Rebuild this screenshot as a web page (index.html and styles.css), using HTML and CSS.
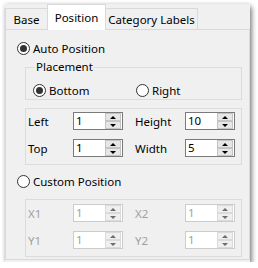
FILE: index.html
```html
<!DOCTYPE html>
<html>
<head>
<meta charset="utf-8">
<link rel="stylesheet" href="styles.css">
</head>
<body>
<div class="window">
  <div class="tabs">
    <div class="tab tab-base">Base</div>
    <div class="tab tab-active">Position</div>
    <div class="tab tab-cat">Category Labels</div>
  </div>
  <div class="panel">
    <div class="radio-row top-radio">
      <span class="radio checked"></span><span>Auto Position</span>
    </div>
    <fieldset class="placement">
      <legend>Placement</legend>
      <div class="place-row">
        <div class="radio-row place-bottom"><span class="radio checked"></span><span>Bottom</span></div>
        <div class="radio-row"><span class="radio"></span><span>Right</span></div>
      </div>
    </fieldset>
    <div class="box box-auto">
      <div class="grid">
        <span class="lbl">Left</span>
        <div class="spin"><span class="val">1</span><span class="btns"><span class="btn up"></span><span class="btn down"></span></span></div>
        <span class="lbl">Height</span>
        <div class="spin"><span class="val">10</span><span class="btns"><span class="btn up"></span><span class="btn down"></span></span></div>
        <span class="lbl">Top</span>
        <div class="spin"><span class="val">1</span><span class="btns"><span class="btn up"></span><span class="btn down"></span></span></div>
        <span class="lbl">Width</span>
        <div class="spin"><span class="val">5</span><span class="btns"><span class="btn up"></span><span class="btn down"></span></span></div>
      </div>
    </div>
    <div class="radio-row custom-radio">
      <span class="radio"></span><span>Custom Position</span>
    </div>
    <div class="box box-custom disabled">
      <div class="grid">
        <span class="lbl">X1</span>
        <div class="spin"><span class="val">1</span><span class="btns"><span class="btn up"></span><span class="btn down"></span></span></div>
        <span class="lbl">X2</span>
        <div class="spin"><span class="val">1</span><span class="btns"><span class="btn up"></span><span class="btn down"></span></span></div>
        <span class="lbl">Y1</span>
        <div class="spin"><span class="val">1</span><span class="btns"><span class="btn up"></span><span class="btn down"></span></span></div>
        <span class="lbl">Y2</span>
        <div class="spin"><span class="val">1</span><span class="btns"><span class="btn up"></span><span class="btn down"></span></span></div>
      </div>
    </div>
  </div>
</div>
</body>
</html>
```

FILE: styles.css
```css
* { box-sizing: border-box; }
html, body { margin: 0; padding: 0; background: #ffffff; }
body {
  font-family: "Noto Sans", "Open Sans", sans-serif;
  font-size: 11.5px;
  line-height: 15px;
  color: #000;
}
.window {
  margin: 4px 0 0 5px;
  width: 245px;
  height: 258px;
  background: #f0f0f0;
  display: flex;
  flex-direction: column;
  box-shadow: 2px 3px 5px rgba(0,0,0,0.45), 0 0 4px rgba(0,0,0,0.15);
}
.tabs {
  height: 25px;
  display: flex;
  align-items: flex-end;
  position: relative;
  z-index: 1;
}
.tab {
  height: 21px;
  border: 1px solid #d9d9d9;
  border-bottom: none;
  background: #f0f0f0;
  display: flex;
  align-items: center;
  justify-content: center;
  padding-top: 1px;
}
.tab-base { width: 43px; }
.tab-active {
  width: 59px;
  height: 26px;
  margin-left: -1px;
  margin-bottom: -1px;
  background: #ffffff;
  padding-bottom: 2px;
}
.tab-cat { width: 93px; margin-left: -1px; }
.panel {
  border: 1px solid #d9d9d9;
  background: #f0f0f0;
  height: 231px;
  display: flex;
  flex-direction: column;
  align-items: flex-start;
}
.radio-row {
  display: flex;
  align-items: center;
  height: 15px;
  gap: 3px;
}
.top-radio { margin: 11px 0 0 11px; }
.radio {
  width: 13px;
  height: 13px;
  border-radius: 50%;
  border: 1px solid #333333;
  background: #ffffff;
  display: inline-flex;
  align-items: center;
  justify-content: center;
}
.radio.checked::after {
  content: "";
  width: 7px;
  height: 7px;
  border-radius: 50%;
  background: #333333;
}
.placement {
  margin: 4px 0 0 19px;
  width: 217px;
  border: 1px solid #dcdcdc;
  padding: 0 0 1px 7px;
  min-width: 0;
}
.placement legend {
  margin-left: 9px;
  padding: 0 1px;
  line-height: 14px;
  margin-left: 2px;
}
.place-row {
  display: flex;
  margin-top: 9px;
}
.place-bottom { width: 103px; }
.box {
  margin-left: 19px;
  width: 217px;
  border: 1px solid #dcdcdc;
}
.box-auto { margin-top: 8px; padding: 3px 0 7px 1px; }
.custom-radio { margin: 9px 0 0 11px; }
.box-custom { margin-top: 10px; padding: 4px 0 7px 1px; }
.grid {
  display: grid;
  grid-template-columns: 46px 50px 12px 50px 50px;
  grid-template-columns: 46px 50px 50px 50px;
  column-gap: 0;
  row-gap: 9px;
  align-items: center;
}
.grid .lbl:nth-child(3), .grid .lbl:nth-child(7) { padding-left: 12px; width: 62px; }
.grid { grid-template-columns: 46px 50px 62px 50px; }
.lbl { padding-left: 1px; }
.spin {
  height: 18px;
  border: 1px solid #7a7a7a;
  background: #ffffff;
  display: flex;
  justify-content: space-between;
}
.val { padding-left: 2px; line-height: 16px; }
.btns {
  width: 16px;
  margin-right: 1px;
  display: flex;
  flex-direction: column;
}
.btn {
  height: 8px;
  border: 1px solid #c4c4c4;
  background: #e6e6e6;
  display: flex;
  align-items: center;
  justify-content: center;
}
.btn::after {
  content: "";
  width: 0;
  height: 0;
  border-left: 3px solid transparent;
  border-right: 3px solid transparent;
}
.up::after { border-bottom: 3px solid #000; }
.down::after { border-top: 3px solid #000; }
.disabled .lbl, .disabled .val { color: #a0a0a0; }
.disabled .spin { border-color: #cccccc; }
.disabled .btn { border-color: #dadada; background: #efefef; }
.disabled .up::after { border-bottom-color: #6d6d6d; }
.disabled .down::after { border-top-color: #6d6d6d; }
```
